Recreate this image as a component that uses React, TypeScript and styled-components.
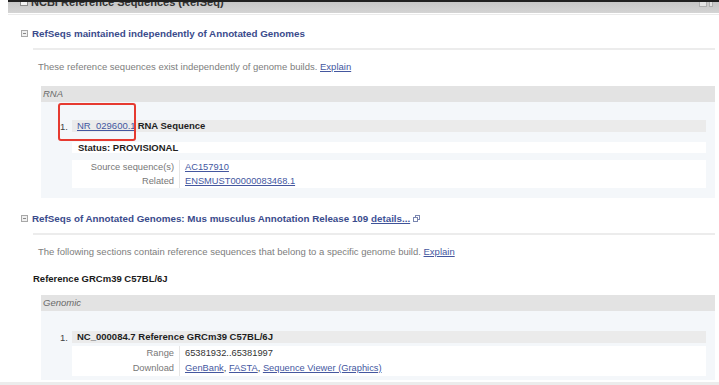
import React from "react";
import styled, { createGlobalStyle } from "styled-components";

const FONT = `"Liberation Sans", Arial, Helvetica, sans-serif`;

const GlobalStyle = createGlobalStyle`
  html, body { margin: 0; padding: 0; background: #ffffff; }
  * { box-sizing: border-box; }
`;

const Page = styled.div`
  width: 719px;
  height: 385px;
  display: flex;
  flex-direction: column;
  overflow: hidden;
  font-family: ${FONT};
  background: #ffffff;
`;

const TopBar = styled.div`
  margin-left: 8px;
  height: 13px;
  border-top: 2px solid #1f1f1f;
  background: linear-gradient(#c6c6c6, #d4d4d4);
  display: flex;
  align-items: flex-start;
  padding: 0 6px 0 12px;
  overflow: hidden;
`;

const TopToggle = styled.span`
  width: 8px;
  height: 8px;
  margin-top: -4px;
  border: 1px solid #8c8c8c;
  background: #f2f2f2;
  flex: none;
`;

const TopTitle = styled.span`
  margin: -6px 0 0 3px;
  font-size: 11px;
  line-height: 12px;
  font-weight: bold;
  color: #333333;
  white-space: nowrap;
  flex: 1;
`;

const TopIcons = styled.svg`
  flex: none;
  margin-top: -2px;
`;

const TopRule = styled.div`
  height: 1px;
  margin: 1px 0 0 8px;
  background: #ebebeb;
`;

const Main = styled.div`
  flex: 1;
  overflow: hidden;
  padding: 0 4px 0 21px;
`;

const Section = styled.section<{ $mt: number }>`
  margin-top: ${(p) => p.$mt}px;
`;

const SectionHead = styled.div`
  display: flex;
  align-items: center;
  height: 14px;
  font-size: 9.8px;
  font-weight: bold;
  color: #3a4b8c;
  white-space: nowrap;
`;

const Toggle = styled.span`
  position: relative;
  width: 7px;
  height: 7px;
  flex: none;
  margin-right: 4px;
  border: 1px solid #a8a8a8;
  background: #f0f0f0;
  &::after {
    content: "";
    position: absolute;
    left: 1px;
    right: 1px;
    top: 2px;
    height: 1px;
    background: #888;
  }
`;

const HeadLink = styled.a`
  color: #3f5399;
  text-decoration: underline;
`;

const ExtIcon = styled.svg`
  margin-left: 3px;
  flex: none;
`;

const Rule = styled.div<{ $mt: number }>`
  margin: ${(p) => p.$mt}px 0 0 12px;
  height: 2px;
  background: #ececec;
`;

const Desc = styled.p`
  margin: 10px 0 0 17px;
  font-size: 9.5px;
  line-height: 14px;
  color: #7d7d7d;
  white-space: nowrap;
`;

const Link = styled.a`
  color: #44579f;
  text-decoration: underline;
`;

const SubTitle = styled.div`
  margin: 13px 0 0 12px;
  font-size: 9.5px;
  line-height: 14px;
  font-weight: bold;
  color: #1a1a1a;
`;

const Box = styled.div<{ $mt: number }>`
  margin: ${(p) => p.$mt}px 0 0 20px;
  background: #f4f7fa;
`;

const BoxHead = styled.div`
  height: 16px;
  padding-left: 2px;
  background: #e3e3e3;
  font-size: 9.5px;
  line-height: 16px;
  font-style: italic;
  color: #6a6a6a;
`;

const BoxBody = styled.div<{ $pt: number; $pb: number }>`
  position: relative;
  padding: ${(p) => p.$pt}px 9px ${(p) => p.$pb}px 19px;
`;

const ItemRow = styled.div`
  display: flex;
  align-items: center;
  height: 12px;
`;

const ItemNum = styled.span`
  width: 12px;
  flex: none;
  font-size: 9.5px;
  color: #444;
`;

const ItemBar = styled.div`
  flex: 1;
  height: 12px;
  padding-left: 5px;
  background: #ebebeb;
  font-size: 9.5px;
  line-height: 12px;
  font-weight: bold;
  color: #1e1e1e;
  white-space: nowrap;
`;

const ItemLink = styled.a`
  color: #44579f;
  font-weight: normal;
  text-decoration: underline;
  margin-right: 2px;
`;

const StatusBox = styled.div`
  margin: 10px 0 0 12px;
  height: 11px;
  padding-left: 6px;
  background: #ffffff;
  font-size: 9.5px;
  line-height: 11px;
  font-weight: bold;
  color: #1e1e1e;
`;

const Table = styled.div<{ $mt: number }>`
  margin: ${(p) => p.$mt}px 0 0 12px;
  background: #ffffff;
`;

const TRow = styled.div<{ $h: number }>`
  display: grid;
  grid-template-columns: 108px 1fr;
  height: ${(p) => p.$h}px;
  line-height: ${(p) => p.$h}px;
  font-size: 9.3px;
  white-space: nowrap;
`;

const TLabel = styled.div`
  text-align: right;
  padding-right: 5px;
  border-right: 1px solid #e6e6e6;
  color: #777;
`;

const TValue = styled.div`
  padding-left: 5px;
  color: #333;
`;

const Highlight = styled.div`
  position: absolute;
  left: 17px;
  top: 1px;
  width: 78px;
  height: 38px;
  border: 2px solid #e63a30;
  border-radius: 3px;
  pointer-events: none;
`;

const Footer = styled.div`
  height: 3px;
  flex: none;
  background: #ececec;
`;

export default function App() {
  return (
    <>
      <GlobalStyle />
      <Page>
        <TopBar>
          <TopToggle />
          <TopTitle>NCBI Reference Sequences (RefSeq)</TopTitle>
          <TopIcons width="14" height="8" viewBox="0 0 14 8">
            <rect x="0.5" y="0.5" width="7" height="6" fill="#e4e4e4" stroke="#b0b0b0" />
            <rect x="10.5" y="0.5" width="3" height="6" fill="#e4e4e4" stroke="#b0b0b0" />
          </TopIcons>
        </TopBar>
        <TopRule />
        <Main>
          <Section $mt={11}>
            <SectionHead>
              <Toggle />
              <span>RefSeqs maintained independently of Annotated Genomes</span>
            </SectionHead>
            <Rule $mt={8} />
            <Desc>
              These reference sequences exist independently of genome builds. <Link>Explain</Link>
            </Desc>
            <Box $mt={12}>
              <BoxHead>RNA</BoxHead>
              <BoxBody $pt={18} $pb={10}>
                <Highlight />
                <ItemRow>
                  <ItemNum>1.</ItemNum>
                  <ItemBar>
                    <ItemLink>NR_029600.1</ItemLink>RNA Sequence
                  </ItemBar>
                </ItemRow>
                <StatusBox>Status: PROVISIONAL</StatusBox>
                <Table $mt={7}>
                  <TRow $h={14}>
                    <TLabel>Source sequence(s)</TLabel>
                    <TValue>
                      <Link>AC157910</Link>
                    </TValue>
                  </TRow>
                  <TRow $h={14}>
                    <TLabel>Related</TLabel>
                    <TValue>
                      <Link>ENSMUST00000083468.1</Link>
                    </TValue>
                  </TRow>
                </Table>
              </BoxBody>
            </Box>
          </Section>
          <Section $mt={13}>
            <SectionHead>
              <Toggle />
              <span>
                RefSeqs of Annotated Genomes: Mus musculus Annotation Release 109{" "}
                <HeadLink>details...</HeadLink>
              </span>
              <ExtIcon width="7" height="7" viewBox="0 0 7 7">
                <rect x="2.5" y="0.5" width="4" height="4" fill="none" stroke="#7a86b0" />
                <rect x="0.5" y="2.5" width="4" height="4" fill="#ffffff" stroke="#7a86b0" />
              </ExtIcon>
            </SectionHead>
            <Rule $mt={8} />
            <Desc>
              The following sections contain reference sequences that belong to a specific genome build.{" "}
              <Link>Explain</Link>
            </Desc>
            <SubTitle>Reference GRCm39 C57BL/6J</SubTitle>
            <Box $mt={9}>
              <BoxHead>Genomic</BoxHead>
              <BoxBody $pt={20} $pb={4}>
                <ItemRow>
                  <ItemNum>1.</ItemNum>
                  <ItemBar>NC_000084.7 Reference GRCm39 C57BL/6J</ItemBar>
                </ItemRow>
                <Table $mt={3}>
                  <TRow $h={15}>
                    <TLabel>Range</TLabel>
                    <TValue>65381932..65381997</TValue>
                  </TRow>
                  <TRow $h={15}>
                    <TLabel>Download</TLabel>
                    <TValue>
                      <Link>GenBank</Link>, <Link>FASTA</Link>, <Link>Sequence Viewer (Graphics)</Link>
                    </TValue>
                  </TRow>
                </Table>
              </BoxBody>
            </Box>
          </Section>
        </Main>
        <Footer />
      </Page>
    </>
  );
}
